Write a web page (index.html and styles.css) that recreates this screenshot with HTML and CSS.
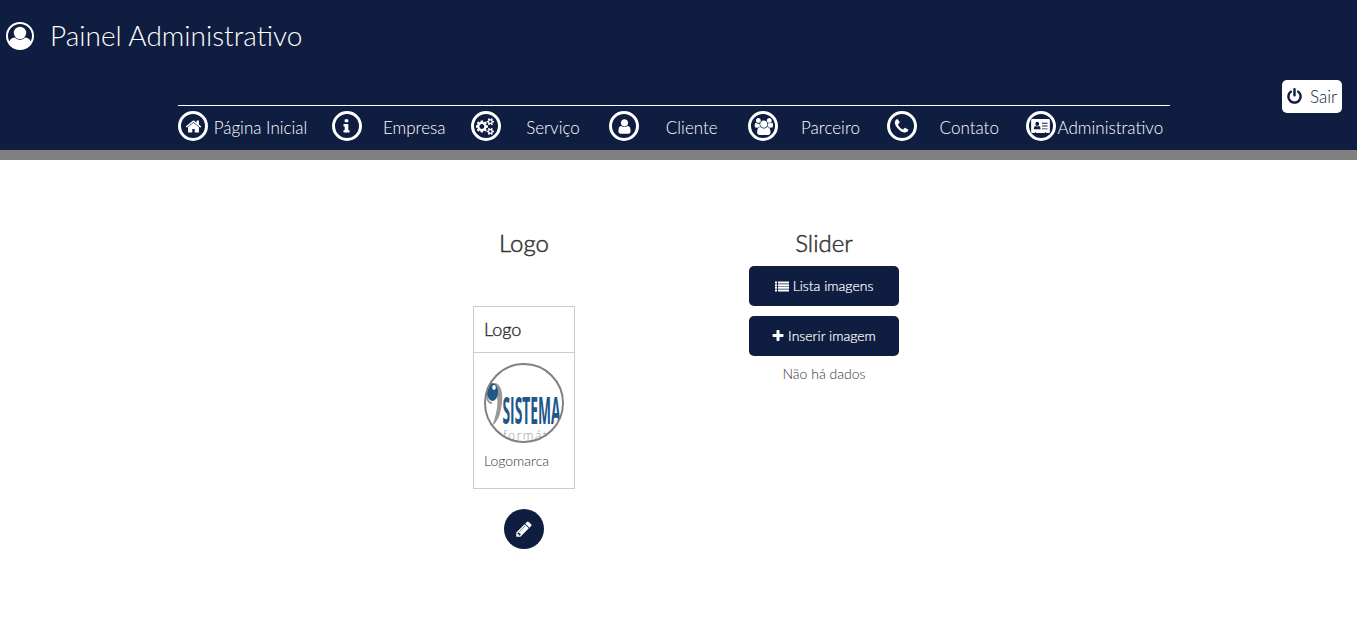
FILE: index.html
```html
<!DOCTYPE html>
<html lang="pt-BR">
<head>
<meta charset="utf-8">
<title>Painel Administrativo</title>
<link rel="stylesheet" href="styles.css">
</head>
<body>
<header class="header">
  <div class="brand">
    <svg class="brand-icon" viewBox="0 0 28 28"><defs><clipPath id="disc"><circle cx="14" cy="14" r="13"/></clipPath></defs><circle cx="14" cy="14" r="13" fill="none" stroke="#fff" stroke-width="2"/><circle cx="14" cy="11" r="6.200"/><path clip-path="url(#disc)" d="M2 28V22C3.500 18 5.500 15.700 8.500 15.600Q14 20.300 19.500 15.600C22.500 15.700 24.500 18 26 22V28z"/></svg>
    <h1 class="title">Painel Administrativo</h1>
  </div>
  <div class="logout-row"><a class="logout"><svg class="power" viewBox="0 0 1792 1792"><path d="M1664 896q0 156-61 298t-164 245-245 164-298 61-298-61-245-164-164-245-61-298q0-182 80.500-343t226.500-270q43-32 95.500-25t83.500 50q32 42 24.500 94.500t-49.500 84.500q-98 74-151.500 181t-53.500 228q0 104 40.500 198.500t109.500 163.500 163.500 109.500 198.500 40.500 198.500-40.500 163.500-109.500 109.500-163.500 40.500-198.500q0-121-53.500-228t-151.500-181q-42-32-49.500-84.500t24.500-94.500q31-43 84-50t95 25q146 109 226.500 270t80.500 343zm-640-768v640q0 52-38 90t-90 38-90-38-38-90v-640q0-52 38-90t90-38 90 38 38 90z"/></svg><span>Sair</span></a></div>
  <nav class="nav">
    <a class="item"><span class="ring"><svg class="glyph" viewBox="0 0 1792 1792"><path d="M1472 992v480q0 26-19 45t-45 19h-384v-384h-256v384h-384q-26 0-45-19t-19-45v-480q0-1 .5-3t.5-3l575-474 575 474q1 2 1 6zm223-69l-62 74q-8 9-21 11h-3q-13 0-21-7l-692-577-692 577q-12 8-24 7-13-2-21-11l-62-74q-8-10-7-23.500t11-21.500l719-599q32-26 76-26t76 26l244 204v-195q0-14 9-23t23-9h192q14 0 23 9t9 23v408l219 182q10 8 11 21.500t-7 23.500z"/></svg></span><span class="label">Página Inicial</span></a>
    <a class="item"><span class="ring"><svg class="glyph" viewBox="0 0 1792 1792"><path d="M1216 1344v128q0 26-19 45t-45 19h-512q-26 0-45-19t-19-45v-128q0-26 19-45t45-19h64v-384h-64q-26 0-45-19t-19-45v-128q0-26 19-45t45-19h384q26 0 45 19t19 45v576h64q26 0 45 19t19 45zm-128-1152v192q0 26-19 45t-45 19h-256q-26 0-45-19t-19-45v-192q0-26 19-45t45-19h256q26 0 45 19t19 45z"/></svg></span><span class="label">Empresa</span></a>
    <a class="item"><span class="ring"><svg class="glyph wide" viewBox="0 0 1920 1792"><path d="M832 896q0-106-75-181t-181-75-181 75-75 181 75 181 181 75 181-75 75-181zm768 512q0-52-38-90t-90-38-90 38-38 90q0 53 37.500 90.500t90.500 37.500 90.500-37.500 37.500-90.500zm0-1024q0-52-38-90t-90-38-90 38-38 90q0 53 37.500 90.500t90.500 37.500 90.500-37.500 37.500-90.500zm-384 421v185q0 10-7 19.500t-16 10.500l-155 24q-11 35-32 76 34 48 90 115 7 11 7 20 0 12-7 19-23 30-82.500 89.500t-78.500 59.500q-11 0-21-7l-115-90q-37 19-77 31-11 108-23 155-7 24-30 24h-186q-11 0-20-7.500t-10-17.500l-23-153q-34-10-75-31l-118 89q-7 7-20 7-11 0-21-8-144-133-144-160 0-9 7-19 10-14 41-53t47-61q-23-44-35-82l-152-24q-10-1-17-9.500t-7-19.500v-185q0-10 7-19.500t16-10.500l155-24q11-35 32-76-34-48-90-115-7-11-7-20 0-12 7-20 22-30 82-89t79-59q11 0 21 7l115 90q34-18 77-32 11-108 23-154 7-24 30-24h186q11 0 20 7.500t10 17.500l23 153q34 10 75 31l118-89q8-7 20-7 11 0 21 8 144 133 144 160 0 8-7 19-12 16-42 54t-45 60q23 48 34 82l152 23q10 2 17 10.500t7 19.500zm640 533v140q0 16-149 31-12 27-30 52 51 113 51 138 0 4-4 7-122 71-124 71-8 0-46-47t-52-68q-20 2-30 2t-30-2q-14 21-52 68t-46 47q-2 0-124-71-4-3-4-7 0-25 51-138-18-25-30-52-149-15-149-31v-140q0-16 149-31 13-29 30-52-51-113-51-138 0-4 4-7 4-2 35-20t59-34 30-16q8 0 46 46.500t52 67.500q20-2 30-2t30 2q51-71 92-112l6-2q4 0 124 70 4 3 4 7 0 25-51 138 17 23 30 52 149 15 149 31zm0-1024v140q0 16-149 31-12 27-30 52 51 113 51 138 0 4-4 7-122 71-124 71-8 0-46-47t-52-68q-20 2-30 2t-30-2q-14 21-52 68t-46 47q-2 0-124-71-4-3-4-7 0-25 51-138-18-25-30-52-149-15-149-31v-140q0-16 149-31 13-29 30-52-51-113-51-138 0-4 4-7 4-2 35-20t59-34 30-16q8 0 46 46.500t52 67.500q20-2 30-2t30 2q51-71 92-112l6-2q4 0 124 70 4 3 4 7 0 25-51 138 17 23 30 52 149 15 149 31z"/></svg></span><span class="label">Serviço</span></a>
    <a class="item"><span class="ring"><svg class="glyph" viewBox="0 0 1792 1792"><path d="M1536 1399q0 109-62.500 187t-150.500 78h-854q-88 0-150.500-78t-62.500-187q0-85 8.500-160.500t31.500-152 58.500-131 94-89 134.500-34.500q131 128 313 128t313-128q76 0 134.500 34.500t94 89 58.500 131 31.500 152 8.500 160.500zm-256-887q0 159-112.500 271.500t-271.500 112.500-271.500-112.500-112.500-271.500 112.500-271.500 271.500-112.500 271.500 112.500 112.500 271.500z"/></svg></span><span class="label">Cliente</span></a>
    <a class="item"><span class="ring"><svg class="glyph wide" viewBox="0 0 1984 1792"><path d="M657 896q-162 5-265 128h-134q-82 0-138-40.500t-56-118.500q0-353 124-353 6 0 43.500 21t97.500 42.500 119 21.500q67 0 133-23-5 37-5 66 0 159 90 295zm1071 637q0 120-73 189.500t-194 69.500h-874q-121 0-194-69.500t-73-189.500q0-53 3.500-103.500t14-109 26.500-108.500 43-97.500 62-81 85.500-53.500 111.500-20q10 0 43 21.500t73 48 107 48 135 21.500 135-21.500 107-48 73-48 43-21.500q61 0 111.500 20t85.500 53.500 62 81 43 97.500 26.500 108.500 14 109 3.500 103.500zm-1024-1277q0 106-75 181t-181 75-181-75-75-181 75-181 181-75 181 75 75 181zm704 384q0 159-112.500 271.500t-271.500 112.500-271.500-112.500-112.500-271.500 112.500-271.500 271.500-112.500 271.500 112.500 112.500 271.500zm576 225q0 78-56 118.500t-138 40.500h-134q-103-123-265-128 90-136 90-295 0-29-5-66 66 23 133 23 59 0 119-21.500t97.500-42.500 43.500-21q124 0 124 353zm-128-609q0 106-75 181t-181 75-181-75-75-181 75-181 181-75 181 75 75 181z"/></svg></span><span class="label">Parceiro</span></a>
    <a class="item"><span class="ring"><svg class="glyph" viewBox="0 0 1792 1792"><path d="M1600 1240q0 27-10 70.500t-21 68.500q-21 50-122 106-94 51-186 51-27 0-52.500-3.500t-57.500-12.500-47.500-14.500-55.500-20.500-49-18q-98-35-175-83-128-79-264.500-215.500t-215.500-264.500q-48-77-83-175-3-9-18-49t-20.500-55.500-14.500-47.500-12.500-57.500-3.500-52.500q0-92 51-186 56-101 106-122 25-11 68.500-21t70.500-10q14 0 21 3 18 6 53 76 11 19 30 54t35 63.500 31 53.500q3 4 17.500 25t21.500 35.500 7 28.500q0 20-28.500 50t-62 55-62 53-28.500 46q0 9 5 22.500t8.500 20.500 14 24 11.500 19q76 137 174 235t235 174q2 1 19 11.500t24 14 20.500 8.500 22.500 5q18 0 46-28.500t53-62 55-62 50-28.500q14 0 28.500 7t35.500 21.500 25 17.500q25 15 53.500 31t63.500 35 54 30q70 35 76 53 3 7 3 21z"/></svg></span><span class="label">Contato</span></a>
    <a class="item"><span class="ring"><svg class="card-glyph" viewBox="0 0 20 16"><path fill-rule="evenodd" d="M1.500 0h17Q20 0 20 1.500v12Q20 15 18.500 15H16v-1.200h-1V15H5v-1.200H4V15H1.500Q0 15 0 13.500v-12Q0 0 1.500 0zM6.500 3a2 2.200 0 1 0 .01 0zM3 11h7c.3-2-.6-3.600-1.800-3.600q-1.700 1.400-3.400 0C3.600 7.400 2.700 9 3 11zM11.500 4v1h6v-1zM11.500 7v1h6v-1zM11.500 10v1h6v-1z"/></svg></span><span class="label">Administrativo</span></a>
  </nav>
</header>
<main class="main">
  <section class="column">
    <h3 class="heading">Logo</h3>
    <div class="card">
      <h4 class="card-title">Logo</h4>
      <div class="card-body">
        <svg class="logo" viewBox="0 0 80 80">
          <defs><clipPath id="badge"><circle cx="40" cy="40" r="39"/></clipPath></defs>
          <g clip-path="url(#badge)">
            <path d="M4 24Q1 40 8 40" fill="none" stroke="#9c9799" stroke-width="2"/>
            <path d="M10 20C18 20 20 33 17 46Q15 58 8 63Q13 51 13.500 39Q13 28 10 22z" fill="#9c9799"/>
            <ellipse cx="8.500" cy="29" rx="5.500" ry="9" fill="#205688"/>
            <ellipse cx="10" cy="24.500" rx="1.800" ry="2.400" fill="#fff"/>
            <text class="logo-name" x="18.500" y="60.500" textLength="58" lengthAdjust="spacingAndGlyphs">SISTEMA</text>
            <text class="logo-sub" x="19" y="76.500">formáti</text>
          </g>
          <circle cx="40" cy="40" r="39" fill="none" stroke="#808080" stroke-width="2"/>
        </svg>
        <p class="caption">Logomarca</p>
      </div>
    </div>
    <a class="edit"><svg class="pencil" viewBox="0 0 1792 1792"><path d="M491 1536l91-91-235-235-91 91v107h128v128h107zm523-928q0-22-22-22-10 0-17 7l-542 542q-7 7-7 17 0 22 22 22 10 0 17-7l542-542q7-7 7-17zm-54-192l416 416-832 832h-416v-416zm683 96q0 53-37 90l-166 166-416-416 166-165q36-38 90-38 53 0 91 38l235 234q37 39 37 91z"/></svg></a>
  </section>
  <section class="column">
    <h3 class="heading">Slider</h3>
    <div class="actions">
      <a class="button"><svg class="list" viewBox="0 0 14 10"><path d="M0 0h2v2H0zM3 0h11v2H3zM0 2.670h2v2H0zM3 2.670h11v2H3zM0 5.330h2v2H0zM3 5.330h11v2H3zM0 8h2v2H0zM3 8h11v2H3z"/></svg><span>Lista imagens</span></a>
      <a class="button"><svg class="plus" viewBox="128 128 1536 1536"><path d="M1600 736v192q0 40-28 68t-68 28h-416v416q0 40-28 68t-68 28h-192q-40 0-68-28t-28-68v-416h-416q-40 0-68-28t-28-68v-192q0-40 28-68t68-28h416v-416q0-40 28-68t68-28h192q40 0 68 28t28 68v416h416q40 0 68 28t28 68z"/></svg><span>Inserir imagem</span></a>
    </div>
    <p class="empty">Não há dados</p>
  </section>
</main>
</body>
</html>
```
FILE: styles.css
```css
* { box-sizing: border-box; }
body { margin: 0; background: #fff; color: #333; font: 300 14px/20px Lato, sans-serif; }
h1, h3, h4, p { margin: 0; }
svg { display: block; flex: none; fill: currentColor; }

.header { height: 160px; background: #0f1d41; border-bottom: 10px solid #808080; color: #fff; }
.brand { display: flex; align-items: center; gap: 16px; height: 72px; padding-left: 6px; }
.brand-icon { width: 28px; height: 28px; }
.title { padding-bottom: 2px; font-size: 28px; font-weight: 300; line-height: 38px; }

.logout-row { display: flex; justify-content: flex-end; height: 33px; padding-right: 15px; margin-top: 8px; }
.logout { display: flex; align-items: center; justify-content: space-between; width: 60px; padding: 0 5px 0 4px; border-radius: 5px; background: #fff; color: #0f1d41; font-size: 17px; }
.power { width: 17px; height: 17px; }

.nav { display: flex; gap: 3.750px; width: 992px; height: 45px; margin: -8px 0 0 178px; padding-top: 5px; border-top: 1px solid #fff; }
.item { display: flex; }
.item:first-child { margin-right: 15px; }
.item:last-child .label { padding-left: 2px; }
.ring { display: flex; align-items: center; justify-content: center; width: 30px; height: 30px; border: 3px solid #fff; border-radius: 50%; }
.glyph { width: 17px; height: 17px; }
.wide { width: 19px; }
.card-glyph { width: 19px; height: 15px; }
.label { width: 105px; font-size: 17px; line-height: 34px; text-align: center; white-space: nowrap; }

.main { display: flex; gap: 150px; padding: 67px 0 0 449px; }
.column { display: flex; flex-direction: column; align-items: center; width: 150px; }
.heading { font-size: 24px; font-weight: 300; line-height: 32px; -webkit-text-stroke: .5px #333; }
.card { width: 102px; height: 183px; margin-top: 47px; border: 1px solid #ccc; }
.card-title { height: 46px; padding-left: 10px; border-bottom: 1px solid #ccc; font-size: 18px; font-weight: 300; line-height: 45px; -webkit-text-stroke: .4px #333; }
.card-body { padding: 10px; }
.logo { width: 80px; height: 80px; }
.logo-name { font: 700 38px "Open Sans", sans-serif; fill: #205688; }
.logo-sub { font: 300 12px "Open Sans", sans-serif; letter-spacing: 1.500px; fill: #999; }
.caption { margin-top: 8px; }
.edit { display: flex; align-items: center; justify-content: center; width: 40px; height: 40px; margin-top: 20px; border-radius: 50%; background: #0f1d41; color: #fff; }
.pencil { width: 18px; height: 18px; }

.actions { display: flex; flex-direction: column; gap: 10px; margin-top: 7px; }
.button { display: flex; align-items: center; justify-content: center; gap: 4px; width: 150px; height: 40px; border-radius: 5px; background: #0f1d41; color: #fff; -webkit-text-stroke: .2px #fff; }
.list { width: 14px; height: 11px; }
.plus { width: 12px; height: 12px; }
.empty { margin-top: 8px; }
```
